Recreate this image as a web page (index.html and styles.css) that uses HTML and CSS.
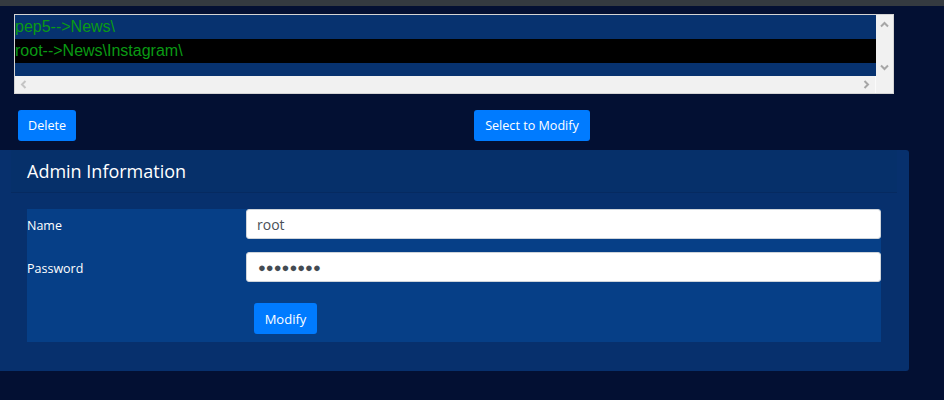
FILE: index.html
```html
<!DOCTYPE html>
<html>
<head>
<meta charset="utf-8">
<link rel="stylesheet" href="styles.css">
</head>
<body>
<div class="topbar"></div>
<div class="listwrap">
  <div class="listbox">
    <div class="list-content">
      <div class="row">pep5--&gt;News\</div>
      <div class="row selected">root--&gt;News\Instagram\</div>
    </div>
    <div class="vbar">
      <svg class="arrow" width="9" height="7" viewBox="0 0 9 7"><polyline points="1,5.5 4.5,2 8,5.5" fill="none" stroke="#a6a6a6" stroke-width="2"/></svg>
      <svg class="arrow" width="9" height="7" viewBox="0 0 9 7"><polyline points="1,1.5 4.5,5 8,1.5" fill="none" stroke="#a6a6a6" stroke-width="2"/></svg>
    </div>
    <div class="hbar">
      <svg class="arrow" width="7" height="9" viewBox="0 0 7 9"><polyline points="5.5,1 2,4.5 5.5,8" fill="none" stroke="#c4c4c4" stroke-width="2"/></svg>
      <svg class="arrow" width="7" height="9" viewBox="0 0 7 9"><polyline points="1.5,1 5,4.5 1.5,8" fill="none" stroke="#a6a6a6" stroke-width="2"/></svg>
    </div>
    <div class="corner"></div>
  </div>
</div>
<div class="actions">
  <div><button class="btn btn-delete">Delete</button></div>
  <div><button class="btn btn-select">Select to Modify</button></div>
</div>
<div class="panel">
  <div class="panel-header">Admin Information</div>
  <div class="form">
    <div class="field">
      <label class="label">Name</label>
      <input class="input" type="text" value="root">
    </div>
    <div class="field">
      <label class="label">Password</label>
      <input class="input dots" type="text" value="●●●●●●●●">
    </div>
    <div class="field">
      <span></span>
      <div class="submit"><button class="btn btn-modify">Modify</button></div>
    </div>
  </div>
</div>
</body>
</html>
```
FILE: styles.css
```css
html, body {
  margin: 0;
  padding: 0;
}
body {
  background: #031033;
  font-family: "Open Sans", "Noto Sans", sans-serif;
  color: #fff;
  width: 944px;
  height: 400px;
  overflow: hidden;
}
.topbar {
  height: 6px;
  background: #343a40;
}
.listwrap {
  padding: 8px 0 0 14px;
}
.listbox {
  box-sizing: border-box;
  width: 880px;
  height: 80px;
  border: 1px solid #d4d4d4;
  display: grid;
  grid-template-columns: 861px 17px;
  grid-template-rows: 61px 17px;
}
.list-content {
  background: #07326f;
  font-family: "Liberation Sans", Arial, sans-serif;
  font-size: 16px;
  color: #0a9a14;
  overflow: hidden;
}
.row {
  height: 24px;
  line-height: 24px;
  white-space: nowrap;
}
.row.selected {
  background: #000;
}
.vbar {
  background: #f1f1f1;
  display: flex;
  flex-direction: column;
  justify-content: space-between;
  align-items: center;
  padding: 6px 0 5px;
}
.hbar {
  background: #f1f1f1;
  display: flex;
  justify-content: space-between;
  align-items: center;
  padding: 0 5px 0 5px;
  border-right: 1px solid #fafafa;
}
.corner {
  background: #f1f1f1;
}
.arrow {
  display: block;
}
.actions {
  display: grid;
  grid-template-columns: 456px 1fr;
  padding: 16px 0 0 18px;
}
.btn {
  height: 31px;
  padding: 0 10px;
  border: none;
  border-radius: 3px;
  background: #007bff;
  color: #fff;
  font-family: "Open Sans", "Noto Sans", sans-serif;
  font-size: 12.6px;
  cursor: pointer;
}
.btn-delete {
  width: 58px;
}
.btn-select {
  width: 116px;
}
.btn-modify {
  width: 63px;
  font-size: 13px;
}
.panel {
  margin-top: 9px;
  width: 909px;
  box-sizing: border-box;
  background: #07306d;
  border-radius: 0 3px 3px 0;
  padding: 0 12px 29px 11px;
}
.panel-header {
  height: 43px;
  box-sizing: border-box;
  border-bottom: 1px solid #062a60;
  background: #06306a;
  padding: 0 16px 1px;
  display: flex;
  align-items: center;
  font-size: 18px;
}
.form {
  margin: 16px 16px 0 16px;
  background: #063f87;
  padding-bottom: 8px;
  display: flex;
  flex-direction: column;
  gap: 13px;
}
.field {
  display: grid;
  grid-template-columns: 219px 1fr;
  align-items: center;
}
.field:last-child {
  margin-top: 8px;
}
.label {
  font-size: 12.5px;
  padding-top: 2px;
}
.input {
  box-sizing: border-box;
  height: 30px;
  border: 1px solid #ced4da;
  border-radius: 3px;
  background: #fff;
  padding: 0 10px;
  font-family: "Open Sans", "Noto Sans", sans-serif;
  font-size: 14px;
  color: #495057;
  width: 100%;
}
.input.dots {
  font-family: "Liberation Sans", Arial, sans-serif;
  font-size: 13px;
  color: #444b52;
  padding-left: 11px;
}
.submit {
  padding-left: 8px;
}
```
